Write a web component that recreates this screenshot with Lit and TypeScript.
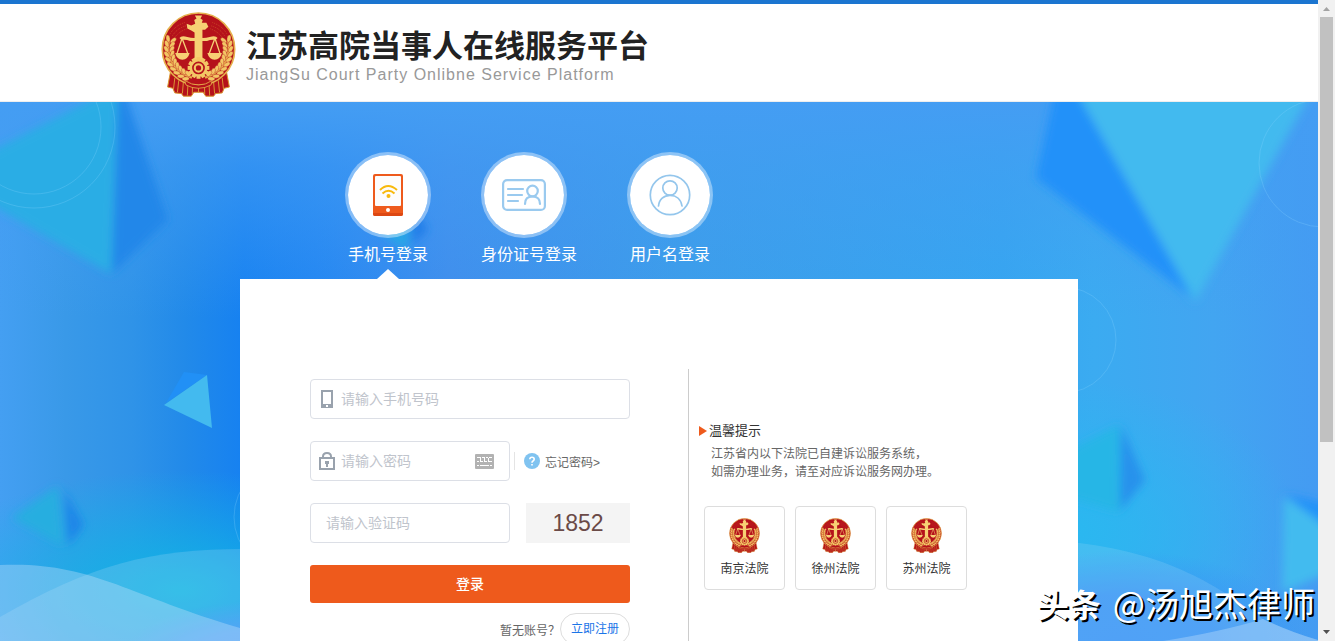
import { LitElement, html, svg, css } from "lit";
import { customElement, state } from "lit/decorators.js";

const grains = [0, 1, 2, 3, 4, 5, 6, 7, 8, 9].flatMap((i) => {
  const deg = 199 - i * 9.5;
  return [81, 98].map((r, row) => {
    const a = (deg * Math.PI) / 180;
    return {
      x: 126 + r * Math.cos(a),
      y: 127 + r * Math.sin(a),
      tilt: deg + (row ? 62 : 118),
    };
  });
});

const teeth = Array.from({ length: 12 }, (_, i) => i * 30);

@customElement("court-emblem")
export class CourtEmblem extends LitElement {
  static styles = css`
    :host { display: block; }
    svg { display: block; width: 100%; height: auto; }
  `;

  render() {
    const side = svg`
      <path d="M42 190 L32 242 L48 246 L54 260 L74 262 L80 270 L104 270 L112 258 L126 258 L126 215 Z" fill="#b5121b" stroke="#d9962f" stroke-width="3"/>
      <path d="M54 214L50 248M66 222L62 258M80 228L77 262M94 232L92 268M108 236L107 264" stroke="#d99435" stroke-width="3"/>`;
    const wheat = svg`
      <path d="M36 96Q22 184 106 214" fill="none" stroke="#e9b04a" stroke-width="7"/>
      ${grains.map((g) => svg`<ellipse cx=${g.x} cy=${g.y} rx="11" ry="6" fill="#f3c765" stroke="#b5121b" stroke-width="1" transform="rotate(${g.tilt} ${g.x} ${g.y})"/>`)}
      <path d="M40 80Q54 56 84 46M47 86Q60 64 88 56M54 91Q68 73 90 65" fill="none" stroke="#d4622c" stroke-width="2" stroke-dasharray="3 3"/>`;
    const scale = svg`
      <path d="M76 94L60 142M76 94L94 142" stroke="#f7d074" stroke-width="4"/>
      <path d="M55 139H99Q94 159 77 159Q60 159 55 139Z" fill="#f7d074"/>`;
    return html`<svg viewBox="12 14 228 258" aria-hidden="true">
      ${side}<g transform="translate(252 0) scale(-1 1)">${side}</g>
      <circle cx="126" cy="127" r="110" fill="#b5121b" stroke="#e6b04c" stroke-width="5"/>
      ${wheat}<g transform="translate(252 0) scale(-1 1)">${wheat}</g>
      <path d="M68 93Q74 84 92 90Q112 95 126 91Q140 95 160 90Q178 84 184 93L178 99Q164 97 152 102H100Q88 97 74 99Z" fill="#f7d074"/>
      ${scale}<g transform="translate(252 0) scale(-1 1)">${scale}</g>
      <path d="M115 25H137L132 34L139 38L136 47H150L156 59L146 68H138V170H114V76L104 70L92 64L90 50L104 55L116 50L113 38L120 34Z" fill="#f7d074"/>
      <g fill="#f3c765">
        ${teeth.map((t) => svg`<rect x="120" y="151" width="12" height="12" transform="rotate(${t} 126 184)"/>`)}
        <circle cx="126" cy="184" r="27"/>
      </g>
      <circle cx="126" cy="184" r="17" fill="#f3c765" stroke="#b5121b" stroke-width="5"/>
      <circle cx="126" cy="184" r="8" fill="#b5121b"/>
      <path d="M84 222Q126 250 168 222L164 236Q126 256 88 236Z" fill="#b5121b" stroke="#e6b04c" stroke-width="2.5"/>
    </svg>`;
  }
}

@customElement("app-root")
export class AppRoot extends LitElement {
  static styles = css`
    :host {
      display: block;
      font-family: "Liberation Sans", "Noto Sans CJK SC", sans-serif;
      font-size: 12px;
      color: #333;
    }
    * { box-sizing: border-box; }
    .window { position: relative; display: flex; height: 100vh; overflow: hidden; }
    .page { flex: 1; min-width: 0; display: flex; flex-direction: column; background: #fff; }

    .header { border-top: 4px solid #1b75d0; border-bottom: 1px solid #eee; height: 102px; flex: none; }
    .brand { display: flex; gap: 10px; max-width: 1000px; margin: 0 auto; padding: 8px 2px 0; }
    .brand court-emblem { width: 75px; }
    .brand-text { padding-top: 17px; }
    h1 { margin: 0; font-size: 31px; line-height: 36px; font-weight: 700; color: #222; white-space: nowrap; }
    .brand p { margin: 0; font-size: 16px; line-height: 20px; letter-spacing: 1px; color: #999; white-space: nowrap; }

    .hero { position: relative; flex: 1; display: flex; flex-direction: column; overflow: hidden; }
    .scene { position: absolute; inset: 0; width: 100%; height: 100%; }
    .content { position: relative; flex: 1; display: flex; flex-direction: column; width: 838px; max-width: 100%; margin: 0 auto; }
    .tabs { display: flex; gap: 50px; padding: 50px 105px 0; }
    .tab {
      position: relative; border: 0; padding: 0 0 12px; background: none; color: #fff;
      font: inherit; font-size: 16px; line-height: 24px; cursor: pointer; text-align: center;
    }
    .disc {
      display: flex; align-items: center; justify-content: center; width: 86px; height: 86px;
      border-radius: 50%; border: 3px solid rgba(255, 255, 255, 0.4); background: #fff;
      background-clip: padding-box; margin-bottom: 5px;
    }
    .disc svg { display: block; }
    .tab.active::after {
      content: ""; position: absolute; left: 50%; bottom: 0; margin-left: -11px;
      border: 11px solid transparent; border-top: 0; border-bottom: 10px solid #fff;
    }

    .card { flex: 1; display: flex; background: #fff; padding: 90px 70px 0; }
    form { width: 320px; margin: 0 58px 0 0; padding-top: 10px; display: flex; flex-direction: column; gap: 22px; flex: none; }
    .row { display: flex; align-items: center; }
    .field { display: flex; align-items: center; gap: 6px; width: 200px; height: 40px; padding: 0 15px 0 8px; border: 1px solid #dcdfe6; border-radius: 4px; }
    .field.wide { width: 100%; }
    .field.plain { padding-left: 15px; }
    .field svg { flex: none; display: block; }
    input { flex: 1; min-width: 0; width: 100%; border: 0; outline: 0; padding: 0; background: none; font: inherit; font-size: 14px; line-height: 20px; color: #606266; }
    input::placeholder { color: #c0c4cc; opacity: 1; }
    .forgot { display: flex; align-items: center; gap: 5px; margin-left: 4px; padding-left: 9px; height: 18px; border-left: 1px solid #e4e4e4; color: #666; text-decoration: none; white-space: nowrap; }
    .captcha { margin-left: 16px; flex: 1; height: 40px; border: 0; background: #f4f4f4; color: #6a4a47; font: inherit; font-size: 23px; }
    .submit { height: 38px; border: 0; border-radius: 3px; padding: 0 0 2px; background: #ee5a1c; color: #fff; font: inherit; font-size: 14px; font-weight: 500; }
    .signup { display: flex; justify-content: flex-end; align-items: center; margin-top: -12px; color: #666; }
    .signup a { width: 70px; height: 32px; line-height: 30px; border: 1px solid #ddd; border-radius: 16px; text-align: center; color: #1b75e8; text-decoration: none; }

    .notice { flex: 1; border-left: 1px solid #ccc; padding: 52px 0 0 10px; white-space: nowrap; }
    h2 { display: flex; align-items: center; gap: 2px; margin: 0 0 4px; font-size: 13px; line-height: 20px; font-weight: 400; }
    .marker { width: 8px; height: 10px; display: block; }
    .notice p { margin: 0 0 25px; padding-left: 12px; line-height: 18px; color: #666; }
    .courts { display: flex; gap: 10px; margin: 0; padding: 0 0 0 5px; list-style: none; }
    .courts a { display: flex; flex-direction: column; align-items: center; gap: 7px; width: 81px; height: 84px; padding-top: 11px; border: 1px solid #ddd; border-radius: 4px; color: #333; line-height: 18px; text-decoration: none; }
    .courts court-emblem { width: 31px; }

    .scrollbar { width: 17px; flex: none; display: flex; flex-direction: column; align-items: center; background: #f1f1f1; }
    .scrollbar svg { width: 17px; height: 17px; display: block; flex: none; }
    .track { flex: 1; width: 13px; }
    .thumb { height: 70%; background: #c1c1c1; }

    .stamp { position: absolute; right: 20px; bottom: 14px; display: flex; align-items: center; gap: 12px; color: #fff; font-family: "Noto Sans CJK SC", sans-serif; font-size: 34px; line-height: 48px; text-shadow: 2px 2px 0 #000; white-space: nowrap; }
    .stamp b { font-size: 32px; font-style: oblique 8deg; font-weight: 700; }
  `;

  @state() private active = 0;

  private phone = html`<svg width="30" height="42" viewBox="0 0 30 42"><rect width="30" height="42" rx="2" fill="#ee5a1c"/><path d="M0 39H30V40A2 2 0 0 1 28 42H2A2 2 0 0 1 0 40Z" fill="#dd4813"/><rect x="2" y="2" width="26" height="30" rx="1" fill="#fdfcfc"/><circle cx="15" cy="36" r="2" fill="#fff"/><g fill="none" stroke="#f8b90c" stroke-width="2"><path d="M7 16Q15 8 24 16M9.500 19.500Q15.500 14 21.500 19.500"/></g><circle cx="15.500" cy="22" r="2" fill="#f8b90c"/></svg>`;
  private idCard = html`<svg width="44" height="32" viewBox="0 0 44 32" fill="none" stroke="#9acaef" stroke-width="2.200" stroke-linecap="round"><rect x="1.100" y="1.100" width="41.800" height="29.800" rx="4"/><path d="M6 10H21M6 16H20M6 22H16"/><circle cx="30.500" cy="12" r="5.300"/><path d="M23 25Q23 17.500 30.500 17.500Q38 17.500 38 25"/></svg>`;
  private person = html`<svg width="42" height="42" viewBox="0 0 42 42" fill="none" stroke="#94c6ec" stroke-width="1.700" stroke-linecap="round"><circle cx="21" cy="21" r="19.700"/><circle cx="21" cy="14" r="7.200"/><path d="M9.500 32C10 25 15 21.300 21 21.300S32 25 33 32"/></svg>`;

  private scene() {
    return html`<svg class="scene" viewBox="0 102 1318 539" preserveAspectRatio="xMidYMin slice" aria-hidden="true">
      <defs>
        <linearGradient id="base" x1="0" x2="1" y1="0" y2="0">
          <stop offset="0" stop-color="#449ff2"/><stop offset=".05" stop-color="#3999e8"/><stop offset=".1" stop-color="#2f93e8"/><stop offset=".14" stop-color="#228ae9"/><stop offset=".185" stop-color="#1681f1"/>
          <stop offset=".24" stop-color="#2185f2"/><stop offset=".34" stop-color="#3f8dec"/><stop offset=".52" stop-color="#3b9de9"/><stop offset=".76" stop-color="#35a6f0"/>
          <stop offset=".83" stop-color="#3babf1"/><stop offset=".92" stop-color="#42a5f1"/><stop offset="1" stop-color="#449bf2"/>
        </linearGradient>
        <linearGradient id="top" x1="0" x2="0" y1="0" y2="1">
          <stop offset="0" stop-color="#449df3"/><stop offset=".12" stop-color="#449df3" stop-opacity=".6"/><stop offset=".4" stop-color="#449df3" stop-opacity="0"/>
        </linearGradient>
        <radialGradient id="cyan"><stop offset="0" stop-color="#12b5e4"/><stop offset="1" stop-color="#12b5e4" stop-opacity="0"/></radialGradient>
        <radialGradient id="sky"><stop offset="0" stop-color="#2ab8f0"/><stop offset="1" stop-color="#2ab8f0" stop-opacity="0"/></radialGradient>
        <radialGradient id="royal"><stop offset="0" stop-color="#3a94f6"/><stop offset=".5" stop-color="#3a94f6" stop-opacity=".9"/><stop offset="1" stop-color="#3a94f6" stop-opacity="0"/></radialGradient>
        <filter id="soft" x="-20%" y="-20%" width="140%" height="140%"><feGaussianBlur stdDeviation="4"/></filter>
        <filter id="soft5" x="-20%" y="-20%" width="140%" height="140%"><feGaussianBlur stdDeviation="5"/></filter>
      </defs>
      <rect y="102" width="1318" height="539" fill="url(#base)"/>
      <rect y="102" width="1318" height="539" fill="url(#top)"/>
      <ellipse cx="180" cy="590" rx="270" ry="120" fill="url(#cyan)"/>
      <ellipse cx="1070" cy="530" rx="230" ry="150" fill="url(#sky)"/>
      <ellipse cx="270" cy="660" rx="150" ry="60" fill="url(#royal)"/>
      <ellipse cx="1120" cy="640" rx="190" ry="90" fill="url(#royal)"/>
      <g filter="url(#soft)">
        <path d="M-20 157L95 98L118 92L111 274L-20 198Z" fill="#2aade5"/>
        <path d="M118 92H125L168 220L112 274Z" fill="#2387e9"/>
        <path d="M12 518L58 486L63 546Z" fill="#26aee0"/>
        <path d="M64 490L84 525L68 546Z" fill="#1d86e8"/>
        <path d="M370 225L410 208L408 252Z" fill="#27a6e6"/>
        <path d="M412 205L428 230L412 245Z" fill="#227ee8"/>
        <path d="M1040 465L1119 425V512L1060 495Z" fill="#28b6e6"/>
        <path d="M1121 425L1145 480L1120 511Z" fill="#2592ec"/>
        <path d="M1284 497L1330 528V572L1282 592Z" fill="#43bbef"/>
        <path d="M1284 494L1330 504V530Z" fill="#2293f8"/>
      </g>
      <g filter="url(#soft5)">
        <path d="M1056 85H1075L1195 300L1036 178Z" fill="#2191f9"/>
        <path d="M1070 80H1318L1195 302Z" fill="#43baef"/>
      </g>
      <path d="M184 372L207 375L166 403Z" fill="#2190f6"/>
      <path d="M164 405L207 375L212 428Z" fill="#43baef"/>
      <g fill="none" stroke="#8fd6ff" stroke-opacity=".25">
        <circle cx="34" cy="127" r="67"/><circle cx="34" cy="127" r="81"/><circle cx="1323" cy="163" r="64"/>
        <circle cx="1063" cy="340" r="53"/><circle cx="290" cy="517" r="56"/>
      </g>
      <g fill="#c8e4fb">
        <path d="M0 565C90 561 125 594 240 628L300 645H0Z" fill-opacity=".36"/>
        <path d="M0 617C90 565 150 549 245 549V645H0Z" fill-opacity=".2"/>
        <path d="M1070 542C1170 552 1220 588 1263 619Q1290 632 1318 640V645H1070Z" fill-opacity=".16"/>
        <path d="M1163 641Q1220 632 1263 619Q1290 632 1318 640V645H1163Z" fill-opacity=".36"/>
      </g>
    </svg>`;
  }

  render() {
    const tabs = [
      { name: "手机号登录", icon: this.phone },
      { name: "身份证号登录", icon: this.idCard },
      { name: "用户名登录", icon: this.person },
    ];
    return html`<div class="window">
      <div class="page">
        <header class="header">
          <div class="brand">
            <court-emblem></court-emblem>
            <div class="brand-text">
              <h1>江苏高院当事人在线服务平台</h1>
              <p>JiangSu Court Party Onlibne Service Platform</p>
            </div>
          </div>
        </header>
        <main class="hero">
          ${this.scene()}
          <div class="content">
            <nav class="tabs">
              ${tabs.map((t, i) => html`<button type="button" class="tab ${i === this.active ? "active" : ""}" @click=${() => (this.active = i)}><span class="disc">${t.icon}</span>${t.name}</button>`)}
            </nav>
            <section class="card">
              <form @submit=${(e: Event) => e.preventDefault()}>
                <label class="field wide">
                  <svg width="16" height="18" viewBox="0 0 16 18"><path fill="#99a2ad" fill-rule="evenodd" d="M2 0H14V18H2ZM4 2V14H12V2ZM7 15V17H9V15Z"/></svg>
                  <input type="tel" aria-label="手机号码" placeholder="请输入手机号码" />
                </label>
                <div class="row">
                  <label class="field">
                    <svg width="16" height="18" viewBox="0 0 16 18"><path d="M4 6V4.500Q4 1 8 1T12 4.500V6" fill="none" stroke="#99a2ad" stroke-width="2"/><path fill="#99a2ad" fill-rule="evenodd" d="M0 5H16V18H0ZM2 7V16H14V7Z"/><path fill="#99a2ad" d="M6 9H10V12H9V15H7V12H6Z"/></svg>
                    <input type="password" aria-label="密码" placeholder="请输入密码" />
                    <svg width="19" height="15" viewBox="0 0 19 15"><rect width="19" height="15" rx="1" fill="#b2b2b2"/><path d="M2 3.500H6M7 3.500H10M11 3.500H13M14 3.500H17M2 7.500H4M5 7.500H8M9 7.500H12M13 7.500H17M2 11.500H4M5 11.500H14M15 11.500H17" stroke="#fff" stroke-width="1"/><path d="M5.500 4V7M9.500 4V7M13.500 4V7" stroke="#fff" stroke-width="1"/></svg>
                  </label>
                  <a class="forgot" href="#"><svg width="16" height="16" viewBox="0 0 16 16"><circle cx="8" cy="8" r="8" fill="#80c3f0"/><path d="M5.800 6.300Q5.800 4.200 8 4.200T10.200 6.200Q10.200 7.200 9 8Q8 8.600 8 9.700M8 11V12.600" fill="none" stroke="#fff" stroke-width="1.600"/></svg>忘记密码&gt;</a>
                </div>
                <div class="row">
                  <label class="field plain"><input type="text" aria-label="验证码" placeholder="请输入验证码" /></label>
                  <button type="button" class="captcha">1852</button>
                </div>
                <button type="submit" class="submit">登录</button>
                <div class="signup"><span>暂无账号？</span><a href="#">立即注册</a></div>
              </form>
              <aside class="notice">
                <h2><svg class="marker" viewBox="0 0 8 10"><path d="M0 0L8 5L0 10Z" fill="#ee5a1c"/></svg>温馨提示</h2>
                <p>江苏省内以下法院已自建诉讼服务系统，<br />如需办理业务，请至对应诉讼服务网办理。</p>
                <ul class="courts">
                  ${["南京法院", "徐州法院", "苏州法院"].map((c) => html`<li><a href="#"><court-emblem></court-emblem>${c}</a></li>`)}
                </ul>
              </aside>
            </section>
          </div>
        </main>
      </div>
      <div class="scrollbar" aria-hidden="true">
        <svg viewBox="0 0 17 17"><path d="M5 11L8.500 7L12 11Z" fill="#a3a3a3"/></svg>
        <div class="track"><div class="thumb"></div></div>
        <svg viewBox="0 0 17 17"><path d="M5 6L8.500 10L12 6Z" fill="#505050"/></svg>
      </div>
      <div class="stamp"><b>头条</b><span>@汤旭杰律师</span></div>
    </div>`;
  }
}
